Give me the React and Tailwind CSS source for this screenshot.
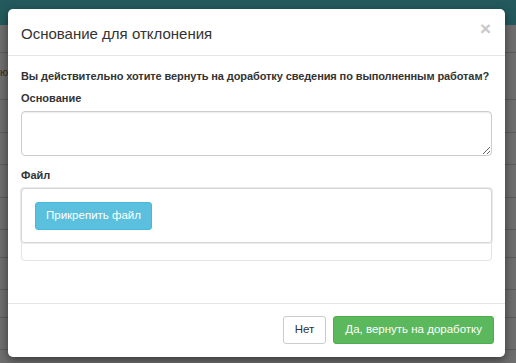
import React from 'react'

const rows = [28, 47, 33, 32, 33, 32, 28, 32, 28, 32, 40]

export default function App() {
    return (
        <div className="relative w-[516px] h-[363px] overflow-hidden bg-[#6e6e6e] font-['Liberation_Sans',Arial,sans-serif] text-[#333]">
            {/* dimmed page behind the dialog */}
            <div className="flex flex-col">
                <div className="h-[25px] bg-[#245a5d]" />
                {rows.map((h, i) => (
                    <div
                        key={i}
                        className="border-b border-[#5c5c5c] bg-[#6f6f6f] text-[11px] leading-none text-[#3a2a1c] pt-[14px]"
                        style={{ height: h }}
                    >
                        {i === 1 ? 'ю' : ''}
                    </div>
                ))}
            </div>

            {/* modal */}
            <div className="absolute inset-0 pl-[8px] pt-[9px]">
                <div className="w-[497px] bg-white rounded-[5px] shadow-[0_3px_10px_rgba(0,0,0,0.5)]">
                    <div className="flex items-center justify-between h-[47px] border-b border-[#e5e5e5] pl-[13px] pr-[13px]">
                        <h4 className="text-[15px] leading-none font-normal text-[#333] pt-[2px]">
                            Основание для отклонения
                        </h4>
                        <span className="text-[19px] leading-none font-bold text-[#c8c8c8] -mt-[8px] pr-[1px]">×</span>
                    </div>

                    <div className="px-[13px] pt-[12px] pb-[42px]">
                        <p className="text-[11px] leading-[17px] font-bold whitespace-nowrap tracking-[-0.1px]">
                            Вы действительно хотите вернуть на доработку сведения по выполненным работам?
                        </p>
                        <label className="block mt-[5px] mb-[4px] text-[11px] leading-[17px] font-bold">
                            Основание
                        </label>
                        <textarea className="block w-full h-[45px] border border-[#ccc] rounded-[4px] shadow-[inset_0_1px_1px_rgba(0,0,0,0.075)] outline-none" />
                        <label className="block mt-[11px] mb-[4px] text-[11px] leading-[17px] font-bold">
                            Файл
                        </label>
                        <div className="h-[73px] border border-[#e3e3e3] rounded-[4px]">
                            <div className="h-[55px] border border-[#d6d6d6] rounded-[3px] shadow-[0_0_0_1px_#ececec] -m-[1px] pl-[13px] pt-[13px]">
                                <button className="h-[28px] px-[10px] bg-[#5bc0de] border border-[#46b8da] rounded-[3px] text-white text-[11.5px] leading-none">
                                    Прикрепить файл
                                </button>
                            </div>
                        </div>
                    </div>

                    <div className="flex justify-end gap-[7px] border-t border-[#e5e5e5] px-[11px] pt-[12px] pb-[13px]">
                        <button className="h-[28px] px-[11px] bg-white border border-[#ccc] rounded-[3px] text-[11.5px] leading-none text-[#333]">
                            Нет
                        </button>
                        <button className="h-[28px] px-[11px] bg-[#5cb85c] border border-[#4cae4c] rounded-[3px] text-[11.5px] leading-none text-white">
                            Да, вернуть на доработку
                        </button>
                    </div>
                </div>
            </div>
        </div>
    )
}
